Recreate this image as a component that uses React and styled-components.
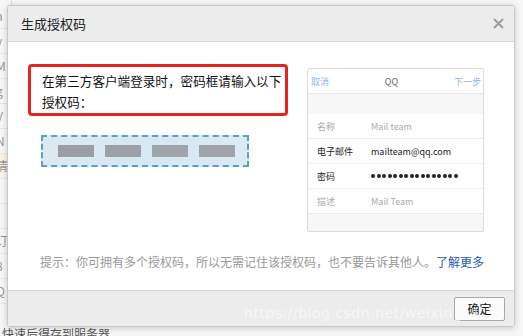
import React from 'react';
import styled, { createGlobalStyle } from 'styled-components';

const GlobalStyle = createGlobalStyle`
  html, body {
    margin: 0;
    padding: 0;
    width: 523px;
    height: 336px;
    overflow: hidden;
    background: #f4f4f4;
    font-family: "Noto Sans CJK SC", "Noto Sans", sans-serif;
  }
`;

const Page = styled.div`
  position: relative;
  width: 523px;
  height: 336px;
  background: #f6f6f6;
  overflow: hidden;
`;

const BackColumn = styled.div`
  display: flex;
  flex-direction: column;
  width: 12px;
  padding-top: 4px;
  border-right: 1px solid #ddd;
  height: 100%;
  box-sizing: border-box;
`;

const BackCell = styled.div`
  height: 24px;
  font-size: 12px;
  line-height: 24px;
  color: #999;
  border-bottom: 1px solid #e6e6e6;
  overflow: hidden;
  text-indent: -4px;
  background: ${p => p.tint || 'transparent'};
`;

const BackText = styled.div`
  position: absolute;
  left: 2px;
  bottom: -6px;
  font-size: 12px;
  color: #555;
`;

const Dialog = styled.div`
  position: absolute;
  left: 7px;
  top: 5px;
  width: 506px;
  height: 320px;
  display: flex;
  flex-direction: column;
  background: #fff;
  border: 1px solid #c8c8c8;
  border-radius: 3px;
  box-shadow: 0 1px 6px rgba(0, 0, 0, 0.18);
  overflow: hidden;
`;

const Header = styled.div`
  height: 35px;
  flex-shrink: 0;
  display: flex;
  align-items: center;
  justify-content: space-between;
  padding: 0 10px 0 13px;
  background: #ececec;
  border-bottom: 1px solid #d6d6d6;
`;

const Title = styled.div`
  font-size: 13px;
  color: #222;
`;

const Close = styled.svg`
  width: 11px;
  height: 11px;
  stroke: #9a9a9a;
  stroke-width: 1.8;
`;

const Body = styled.div`
  flex: 1;
  display: flex;
  flex-direction: column;
  padding: 22px 0 0 20px;
`;

const Main = styled.div`
  display: flex;
  justify-content: space-between;
  padding-right: 30px;
`;

const Left = styled.div`
  display: flex;
  flex-direction: column;
`;

const Notice = styled.div`
  width: 260px;
  height: 52px;
  box-sizing: border-box;
  border: 3px solid #e3251e;
  border-radius: 4px;
  padding: 3px 0 0 11px;
  font-size: 12.6px;
  line-height: 21px;
  color: #111;
`;

const CodeBox = styled.div`
  margin: 19px 0 0 13px;
  width: 208px;
  height: 32px;
  box-sizing: border-box;
  border: 2px dashed #5b9ec8;
  background: linear-gradient(90deg, #dde9f1 0%, #d6e8f3 50%, #dbeaf4 100%);
  display: flex;
  align-items: center;
  gap: 11px;
  padding-left: 15px;
`;

const Blur = styled.div`
  width: ${p => p.w}px;
  height: 12px;
  background: ${p => p.c || '#9aa2ab'};
  filter: blur(0.6px);
`;

const Phone = styled.div`
  margin-top: 4px;
  width: 177px;
  height: 164px;
  box-sizing: border-box;
  border: 1px solid #dcdcdc;
  border-radius: 2px;
  background: #f7f7f7;
  display: flex;
  flex-direction: column;
`;

const NavBar = styled.div`
  height: 24px;
  display: flex;
  align-items: center;
  justify-content: space-between;
  padding: 0 2px 0 3px;
  background: #fff;
  border-bottom: 1px solid #e9e9e9;
  font-size: 9px;
  color: #666;
`;

const NavLink = styled.span`
  color: #8fb8e3;
`;

const Rows = styled.div`
  margin-top: 20px;
  background: #fff;
`;

const Row = styled.div`
  height: 24px;
  display: flex;
  align-items: center;
  padding-left: 9px;
  border-bottom: 1px solid #ececec;
  font-size: 9px;
  color: ${p => (p.dim ? '#aaa' : '#222')};
`;

const Label = styled.span`
  width: 54px;
  flex-shrink: 0;
`;

const Dots = styled.span`
  display: flex;
  gap: 1.5px;
`;

const Dot = styled.i`
  width: 4px;
  height: 4px;
  border-radius: 50%;
  background: #222;
`;

const Hint = styled.div`
  margin: 21px 0 0 12px;
  font-size: 12px;
  color: #999;
  white-space: nowrap;
`;

const Link = styled.span`
  color: #1d5ca8;
`;

const Footer = styled.div`
  height: 35px;
  flex-shrink: 0;
  position: relative;
  display: flex;
  align-items: center;
  justify-content: flex-end;
  padding-right: 9px;
  background: #ececec;
  border-top: 1px solid #d4d4d4;
`;

const Button = styled.button`
  width: 51px;
  height: 24px;
  border: 1px solid #a9a9a9;
  border-radius: 2px;
  background: #fbfbfb;
  font-family: inherit;
  font-size: 12px;
  color: #111;
  padding: 0;
`;

const Watermark = styled.div`
  position: absolute;
  left: 236px;
  top: 14px;
  font-family: "DejaVu Sans", sans-serif;
  font-size: 14px;
  color: rgba(255, 255, 255, 0.6);
  letter-spacing: 0.5px;
  pointer-events: none;
  z-index: 1;
`;

const backCells = [
  { t: 'a' }, { t: 'v' }, { t: 'M' }, { t: 'g' }, { t: 'V' }, { t: 'N' },
  { t: '清', tint: '#fbf3e6' }, { t: '' }, { t: '' }, { t: '订' }, { t: '8' }, { t: 'Q' },
];

export default function App() {
  return (
    <Page>
      <GlobalStyle />
      <BackColumn>
        {backCells.map((c, i) => (
          <BackCell key={i} tint={c.tint}>{c.t}</BackCell>
        ))}
      </BackColumn>
      <BackText>快速后得存到服务器</BackText>
      <Dialog>
        <Header>
          <Title>生成授权码</Title>
          <Close viewBox="0 0 11 11">
            <path d="M1 1L10 10M10 1L1 10" />
          </Close>
        </Header>
        <Body>
          <Main>
            <Left>
              <Notice>在第三方客户端登录时，密码框请输入以下授权码：</Notice>
              <CodeBox>
                <Blur w={36} c="#9c9ea5" />
                <Blur w={36} c="#9ca1a8" />
                <Blur w={36} c="#a0a4ab" />
                <Blur w={36} c="#a0a3aa" />
              </CodeBox>
            </Left>
            <Phone>
              <NavBar>
                <NavLink>取消</NavLink>
                <span>QQ</span>
                <NavLink>下一步</NavLink>
              </NavBar>
              <Rows>
                <Row dim><Label>名称</Label>Mail team</Row>
                <Row><Label>电子邮件</Label>mailteam@qq.com</Row>
                <Row>
                  <Label>密码</Label>
                  <Dots>
                    {Array.from({ length: 16 }).map((_, i) => <Dot key={i} />)}
                  </Dots>
                </Row>
                <Row dim><Label>描述</Label>Mail Team</Row>
              </Rows>
            </Phone>
          </Main>
          <Hint>
            提示：你可拥有多个授权码，所以无需记住该授权码，也不要告诉其他人。<Link>了解更多</Link>
          </Hint>
        </Body>
        <Footer>
          <Watermark>https://blog.csdn.net/weixin_44...</Watermark>
          <Button>确定</Button>
        </Footer>
      </Dialog>
    </Page>
  );
}
